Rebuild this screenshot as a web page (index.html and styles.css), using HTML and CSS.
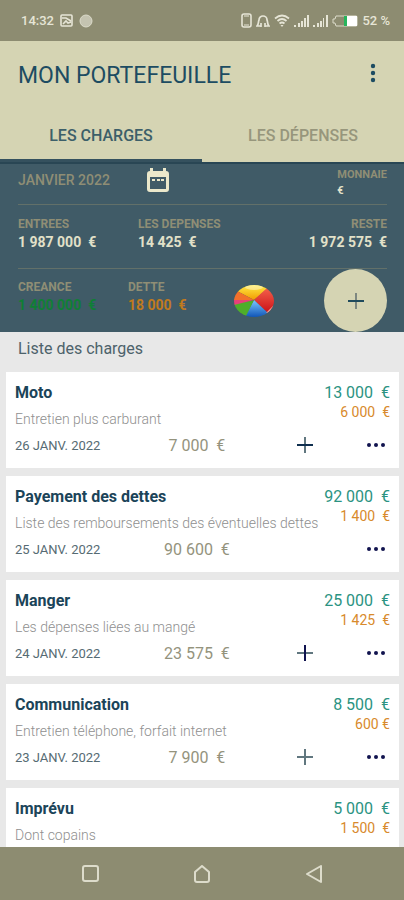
FILE: index.html
```html
<!DOCTYPE html>
<html lang="fr">
<head>
    <meta charset="UTF-8">
    <meta name="viewport" content="width=device-width, initial-scale=1.0">
    <title>Mon portefeuille</title>
    <link rel="stylesheet" href="styles.css">
</head>
<body>
    <!-- Status bar -->
    <div class="status-bar">
        <div class="status-group">
            <span>14:32</span>
            <svg width="13" height="13" viewBox="0 0 13 13" fill="none" stroke="currentColor" stroke-width="1.6"><rect x="1" y="1" width="11" height="11" rx="1"/><path d="M2 4h4l5 3M3 10l3-3 2 2 3-1"/></svg>
            <svg width="14" height="14" viewBox="0 0 14 14"><circle cx="7" cy="7" r="6" fill="#c4c3b0" stroke="#dcdbca"/></svg>
        </div>
        <div class="status-group status-right">
            <svg width="11" height="15" viewBox="0 0 11 15" fill="none" stroke="currentColor" stroke-width="1.6"><rect x="1" y="1" width="9" height="13" rx="2"/><path d="M3 3h5M3 12h5" stroke-width="1"/></svg>
            <svg width="14" height="14" viewBox="0 0 14 14" fill="none" stroke="currentColor" stroke-width="1.7"><path d="M5 12H1c2-2 1-4 2-6a4 4 0 0 1 8 0c1 2 0 4 2 6H9M5 13V9M9 13V9"/></svg>
            <svg width="16" height="13" viewBox="0 0 16 13" fill="none" stroke="currentColor" stroke-width="1.7"><path d="M1 4.500Q8-1.500 15 4.500M3.500 7Q8 3 12.500 7M5.500 9.500Q8 7.500 10.500 9.500"/><path d="M6.500 11h3L8 13z" fill="currentColor" stroke="none"/></svg>
            <svg width="15" height="12" viewBox="0 0 15 12" fill="currentColor"><path d="M0 10h2v2H0zM4 8h2v4H4zM7 6h2v6H7zM10 3h2v9h-2zM13 0h2v12h-2z"/></svg>
            <svg width="15" height="12" viewBox="0 0 15 12" fill="currentColor"><path d="M0 10h2v2H0zM4 8h2v4H4zM7 6h2v6H7zM10 3h1v9h-1zM13 0h2v12h-2z"/></svg>
            <svg width="26" height="12" viewBox="0 0 26 12"><path d="M4 1h20a1 1 0 0 1 1 1v8a1 1 0 0 1-1 1H4L3 8H1V4h2z" fill="none" stroke="#dcdbca"/><path d="M13 1h12v10H13z" fill="#fff"/><path d="M12 1h3v10h-3z" fill="#27b45c"/></svg>
            <span>52 %</span>
        </div>
    </div>

    <!-- App bar with tabs -->
    <header class="app-bar">
        <div class="title-row">
            <h1>MON PORTEFEUILLE</h1>
            <button class="icon-btn menu-btn" aria-label="Menu">
                <svg width="6" height="20" viewBox="0 0 6 20" fill="currentColor"><circle cx="3" cy="3" r="2.200"/><circle cx="3" cy="10" r="2.200"/><circle cx="3" cy="17" r="2.200"/></svg>
            </button>
        </div>
        <nav class="tabs">
            <a href="#charges" class="tab active">LES CHARGES</a>
            <a href="#depenses" class="tab">LES DÉPENSES</a>
        </nav>
    </header>

    <!-- Summary of the month -->
    <section class="summary">
        <div class="summary-row month-row">
            <span class="month">JANVIER 2022</span>
            <button class="icon-btn" aria-label="Choisir un mois">
                <svg width="22" height="24" viewBox="0 0 22 24"><path fill="#ebe8cb" fill-rule="evenodd" d="M3 3V0h3v3h10V0h3v3a3 3 0 0 1 3 3v15a3 3 0 0 1-3 3H3a3 3 0 0 1-3-3V6a3 3 0 0 1 3-3zM3 9v12h16V9z"/><path fill="#ebe8cb" d="M5 11h3v2H5zM10 11h3v2h-3zM14 11h3v2h-3z"/></svg>
            </button>
            <div class="figure currency">
                <span class="label">MONNAIE</span>
                <span class="value">€</span>
            </div>
        </div>
        <div class="summary-row totals-row">
            <div class="figure">
                <span class="label">ENTREES</span>
                <span class="value">1 987 000&nbsp; €</span>
            </div>
            <div class="figure">
                <span class="label">LES DEPENSES</span>
                <span class="value">14 425&nbsp; €</span>
            </div>
            <div class="figure right">
                <span class="label">RESTE</span>
                <span class="value">1 972 575&nbsp; €</span>
            </div>
        </div>
        <div class="summary-row debts-row">
            <div class="figure">
                <span class="label">CREANCE</span>
                <span class="value green">1 400 000&nbsp; €</span>
            </div>
            <div class="figure">
                <span class="label">DETTE</span>
                <span class="value orange">18 000&nbsp; €</span>
            </div>
            <button class="icon-btn" aria-label="Statistiques">
                <svg width="40" height="34" viewBox="0 0 40 34">
                    <defs>
                        <linearGradient id="yellow" x1="0" y1="0" x2="0" y2="1"><stop offset="0" stop-color="#fff04a"/><stop offset="1" stop-color="#f29a00"/></linearGradient>
                        <linearGradient id="blue" x1="0" y1="0" x2="0" y2="1"><stop offset="0" stop-color="#7cc8ff"/><stop offset="1" stop-color="#0a4fb4"/></linearGradient>
                        <linearGradient id="red" x1="0" y1="0" x2="0" y2="1"><stop offset="0" stop-color="#f4604a"/><stop offset="1" stop-color="#c80d16"/></linearGradient>
                        <clipPath id="pie"><ellipse cx="20" cy="17" rx="20" ry="16"/></clipPath>
                    </defs>
                    <g clip-path="url(#pie)">
                        <path d="M20 16L3 7V0h30v5z" fill="url(#yellow)"/>
                        <path d="M20 16L33 4l7 0v20l-5 6z" fill="url(#red)"/>
                        <path d="M20 16l15 14-4 4H10z" fill="url(#blue)"/>
                        <path d="M20 16L11 34 0 27v-7z" fill="#4fae2a"/>
                        <path d="M20 16L0 21v-6z" fill="#e8407a"/>
                        <path d="M20 16L0 16V5l3 2z" fill="#f2702a"/>
                        <path d="M32 29l8-8v6z" fill="#f7b0a2"/>
                        <ellipse cx="20" cy="3" rx="9" ry="3" fill="#fff" opacity=".4"/>
                    </g>
                </svg>
            </button>
            <button class="fab" aria-label="Ajouter une charge">
                <svg width="16" height="16" viewBox="0 0 16 16" fill="none" stroke-width="2"><path d="M8 0v16" stroke="#7d8780"/><path d="M0 8h16" stroke="#1f4a5c"/></svg>
            </button>
        </div>
    </section>

    <!-- List of charges -->
    <main class="charges" id="charges">
        <h2>Liste des charges</h2>

        <article class="card">
            <div class="card-top">
                <div>
                    <h3>Moto</h3>
                    <p>Entretien plus carburant</p>
                </div>
                <div class="amounts">
                    <span class="budget">13 000&nbsp; €</span>
                    <span class="spent">6 000&nbsp; €</span>
                </div>
            </div>
            <div class="card-bottom">
                <span class="date">26 JANV. 2022</span>
                <span class="left">7 000&nbsp; €</span>
                <button class="icon-btn add-btn" aria-label="Ajouter une dépense">
                    <svg width="16" height="16" viewBox="0 0 16 16" fill="none" stroke-width="2"><path d="M8 0v16" stroke="#61777f"/><path d="M0 8h16" stroke="#0f2f4f"/></svg>
                </button>
                <button class="icon-btn more-btn" aria-label="Plus d'options">
                    <svg width="18" height="4" viewBox="0 0 18 4" fill="currentColor"><circle cx="2" cy="2" r="2"/><circle cx="9" cy="2" r="2"/><circle cx="16" cy="2" r="2"/></svg>
                </button>
            </div>
        </article>

        <article class="card">
            <div class="card-top">
                <div>
                    <h3>Payement des dettes</h3>
                    <p>Liste des remboursements des éventuelles dettes</p>
                </div>
                <div class="amounts">
                    <span class="budget">92 000&nbsp; €</span>
                    <span class="spent">1 400&nbsp; €</span>
                </div>
            </div>
            <div class="card-bottom">
                <span class="date">25 JANV. 2022</span>
                <span class="left">90 600&nbsp; €</span>
                <button class="icon-btn more-btn" aria-label="Plus d'options">
                    <svg width="18" height="4" viewBox="0 0 18 4" fill="currentColor"><circle cx="2" cy="2" r="2"/><circle cx="9" cy="2" r="2"/><circle cx="16" cy="2" r="2"/></svg>
                </button>
            </div>
        </article>

        <article class="card">
            <div class="card-top">
                <div>
                    <h3>Manger</h3>
                    <p>Les dépenses liées au mangé</p>
                </div>
                <div class="amounts">
                    <span class="budget">25 000&nbsp; €</span>
                    <span class="spent">1 425&nbsp; €</span>
                </div>
            </div>
            <div class="card-bottom">
                <span class="date">24 JANV. 2022</span>
                <span class="left">23 575&nbsp; €</span>
                <button class="icon-btn add-btn" aria-label="Ajouter une dépense">
                    <svg width="16" height="16" viewBox="0 0 16 16" fill="none" stroke-width="2"><path d="M0 8h16" stroke="#61777f"/><path d="M8 0v16" stroke="#10134f"/></svg>
                </button>
                <button class="icon-btn more-btn" aria-label="Plus d'options">
                    <svg width="18" height="4" viewBox="0 0 18 4" fill="currentColor"><circle cx="2" cy="2" r="2"/><circle cx="9" cy="2" r="2"/><circle cx="16" cy="2" r="2"/></svg>
                </button>
            </div>
        </article>

        <article class="card">
            <div class="card-top">
                <div>
                    <h3>Communication</h3>
                    <p>Entretien téléphone, forfait internet</p>
                </div>
                <div class="amounts">
                    <span class="budget">8 500&nbsp; €</span>
                    <span class="spent">600 €</span>
                </div>
            </div>
            <div class="card-bottom">
                <span class="date">23 JANV. 2022</span>
                <span class="left">7 900&nbsp; €</span>
                <button class="icon-btn add-btn" aria-label="Ajouter une dépense">
                    <svg width="16" height="16" viewBox="0 0 16 16" fill="none" stroke="#61777f" stroke-width="2"><path d="M8 0v16M0 8h16"/></svg>
                </button>
                <button class="icon-btn more-btn" aria-label="Plus d'options">
                    <svg width="18" height="4" viewBox="0 0 18 4" fill="currentColor"><circle cx="2" cy="2" r="2"/><circle cx="9" cy="2" r="2"/><circle cx="16" cy="2" r="2"/></svg>
                </button>
            </div>
        </article>

        <article class="card">
            <div class="card-top">
                <div>
                    <h3>Imprévu</h3>
                    <p>Dont copains</p>
                </div>
                <div class="amounts">
                    <span class="budget">5 000&nbsp; €</span>
                    <span class="spent">1 500&nbsp; €</span>
                </div>
            </div>
        </article>
    </main>

    <!-- System navigation -->
    <div class="nav-bar">
        <button class="icon-btn" aria-label="Applications récentes">
            <svg width="18" height="18" viewBox="0 0 18 18" fill="none" stroke="currentColor" stroke-width="2"><rect x="2" y="1" width="15" height="15" rx="2"/></svg>
        </button>
        <button class="icon-btn" aria-label="Accueil">
            <svg width="18" height="18" viewBox="0 0 18 18" fill="none" stroke="currentColor" stroke-width="2" stroke-linejoin="round"><path d="M9 1l7 6v8q0 2-2 2H4q-2 0-2-2V7z"/></svg>
        </button>
        <button class="icon-btn" aria-label="Retour">
            <svg width="18" height="18" viewBox="0 0 18 18" fill="none" stroke="currentColor" stroke-width="2" stroke-linejoin="round"><path d="M16 1v16L2 9z"/></svg>
        </button>
    </div>
</body>
</html>
```
FILE: styles.css
```css
* {
    box-sizing: border-box;
}

body {
    font-family: Roboto, sans-serif;
    background-color: #e8e8e8;
    margin: 0;
    height: 100vh;
    display: flex;
    flex-direction: column;
    overflow: hidden;
}

h1, h2, h3, p {
    margin: 0;
}

.icon-btn {
    display: flex;
    align-items: center;
    justify-content: center;
    padding: 0;
    border: none;
    background: none;
    color: inherit;
    cursor: pointer;
}

/* Status bar */
.status-bar {
    flex: none;
    display: flex;
    justify-content: space-between;
    align-items: center;
    height: 41px;
    padding: 0 14px 0 21px;
    background-color: #8d8c71;
    color: #e6e5d6;
    font-size: 13px;
    font-weight: 500;
}

.status-group {
    display: flex;
    align-items: center;
    gap: 6px;
}

.status-right {
    gap: 4px;
}

/* App bar */
.app-bar {
    flex: none;
    background-color: #d5d4b3;
    color: #1d4c62;
}

.title-row {
    display: flex;
    justify-content: space-between;
    align-items: center;
    height: 68px;
    padding: 0 24px 0 18px;
}

h1 {
    font-size: 23px;
    font-weight: 400;
}

.menu-btn {
    width: 14px;
    height: 28px;
    margin-bottom: 4px;
}

.tabs {
    display: flex;
}

.tab {
    flex: 1;
    height: 53px;
    line-height: 53px;
    border-bottom: 3px solid transparent;
    text-align: center;
    text-decoration: none;
    font-size: 16px;
    font-weight: 500;
    color: #97967c;
}

.tab.active {
    color: #3d5f69;
    border-bottom-color: #35515e;
}

/* Summary */
.summary {
    flex: none;
    padding: 0 17px 0 18px;
    background-color: #405b67;
    border-top: 2px solid #294654;
}

.summary-row {
    display: grid;
    border-bottom: 1px solid #627069;
}

.month-row {
    grid-template-columns: 35% 1fr auto;
    height: 41px;
}

.month-row .icon-btn {
    justify-self: start;
    align-self: start;
    margin-top: 4px;
}

.totals-row {
    grid-template-columns: 120px 1fr auto;
    height: 64px;
    padding-top: 10px;
}

.debts-row {
    grid-template-columns: 110px 1fr 40px 113px;
    border-bottom: none;
}

.debts-row .figure {
    padding-top: 9px;
}

.month {
    padding-top: 7px;
    line-height: 18px;
    font-size: 14px;
    font-weight: 500;
    color: #8f8e75;
}

.figure {
    display: flex;
    flex-direction: column;
}

.label {
    line-height: 18px;
    font-size: 12px;
    font-weight: 700;
    color: #8f8e75;
}

.value {
    line-height: 18px;
    font-size: 14px;
    font-weight: 700;
    color: #e2e1c9;
}

.right {
    text-align: right;
}

.currency {
    padding-top: 3px;
}

.currency .label,
.currency .value {
    line-height: 16px;
    font-size: 11px;
}

.green {
    color: #0f7f35;
}

.orange {
    color: #c17a1e;
}

.fab {
    display: flex;
    align-items: center;
    justify-content: center;
    justify-self: end;
    width: 63px;
    height: 63px;
    padding: 0;
    border: none;
    border-radius: 50%;
    background-color: #d5d4b3;
    cursor: pointer;
}

/* Charges */
.charges {
    flex: 1;
    min-height: 0;
    overflow: hidden;
    padding: 0 5px 0 6px;
}

h2 {
    height: 40px;
    padding-left: 12px;
    line-height: 34px;
    font-size: 16px;
    font-weight: 400;
    color: #4d626b;
}

.card {
    height: 96px;
    margin-bottom: 8px;
    padding: 11px 9px 0;
    background-color: #fff;
}

.card-top {
    display: flex;
    justify-content: space-between;
    height: 50px;
}

h3 {
    line-height: 20px;
    font-size: 16px;
    font-weight: 700;
    color: #1b4459;
}

.card p {
    padding-top: 6px;
    line-height: 20px;
    font-size: 14px;
    font-weight: 300;
    color: #8f8f8f;
    white-space: nowrap;
}

.amounts {
    display: flex;
    flex-direction: column;
    text-align: right;
    white-space: nowrap;
}

.budget {
    line-height: 20px;
    font-size: 16px;
    color: #2b9382;
}

.spent {
    line-height: 18px;
    font-size: 14px;
    color: #d88a2c;
}

.card-bottom {
    display: flex;
    align-items: center;
    height: 24px;
}

.date {
    width: 35%;
    font-size: 13px;
    color: #566b73;
}

.left {
    width: 27%;
    text-align: center;
    font-size: 16px;
    color: #94937d;
}

.add-btn {
    flex: 1;
    height: 24px;
}

.more-btn {
    width: 28px;
    height: 24px;
    margin-left: auto;
    color: #11134f;
}

/* System navigation */
.nav-bar {
    flex: none;
    display: flex;
    justify-content: space-around;
    align-items: center;
    height: 53px;
    padding: 0 34px;
    background-color: #8d8c71;
    color: #dddccb;
}
```
